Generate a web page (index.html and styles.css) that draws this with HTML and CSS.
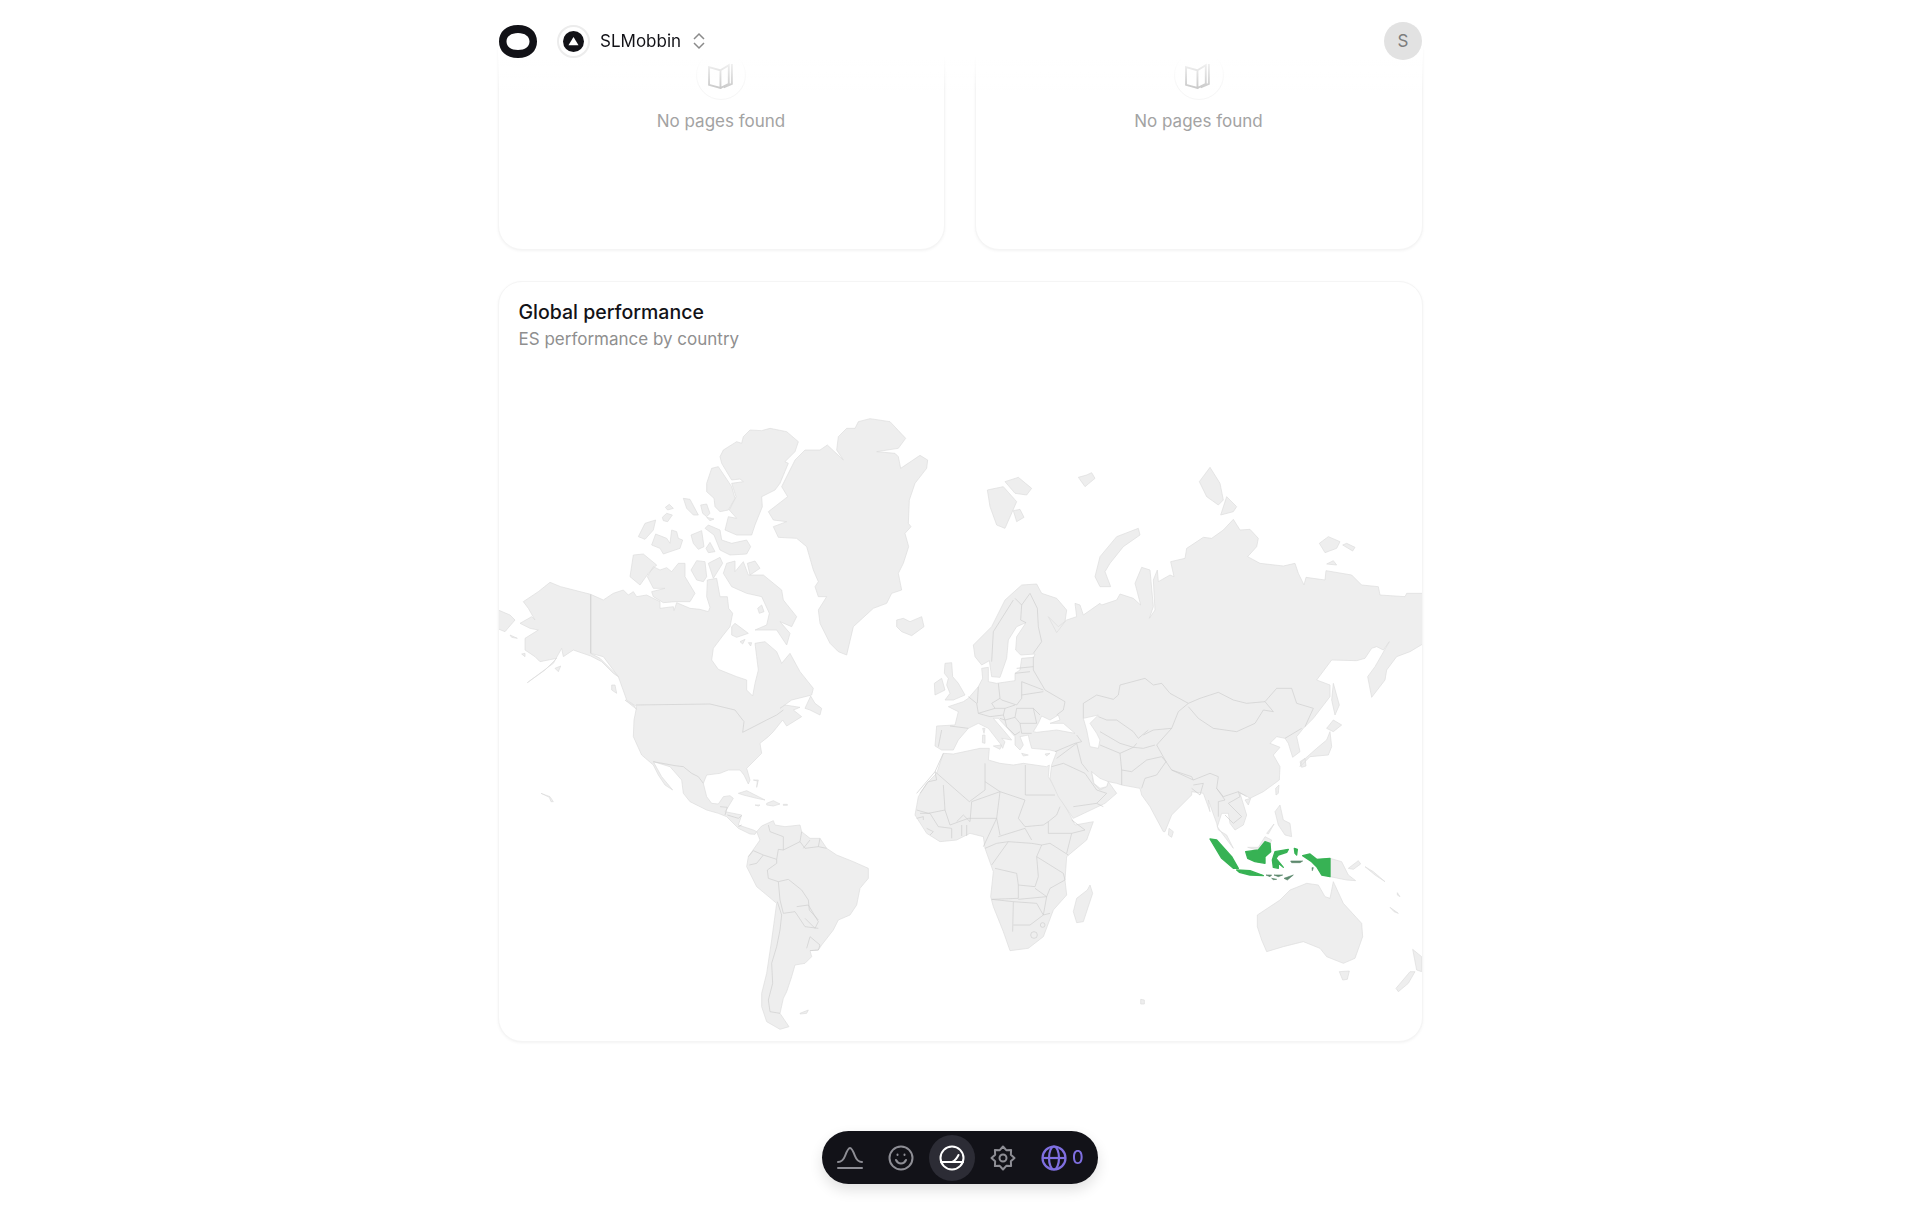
FILE: index.html
```html
<!DOCTYPE html>
<html lang="en">
<head>
  <meta charset="UTF-8" />
  <meta name="viewport" content="width=device-width, initial-scale=1.0"/>
  <title>Global performance</title>
  <link rel="stylesheet" href="styles.css">
</head>
<body>

  <header class="topbar">
    <div class="topbar-left">
      <svg class="logo" viewBox="0 0 38 33"><path fill-rule="evenodd" d="M19 0C31 0 38 7 38 16.5S31 33 19 33S0 26 0 16.5S7 0 19 0ZM19 8C12 8 7.500 11.500 7.500 16.500S12 25 19 25S30.500 21.500 30.500 16.500S26 8 19 8Z"/></svg>
      <div class="org-badge">
        <span class="org-dot"><svg viewBox="0 0 12 10"><path d="M6 .5L11.5 9.500H.5Z"/></svg></span>
      </div>
      <span class="org-name">SLMobbin</span>
      <svg class="chevrons" viewBox="0 0 14 18"><path d="M2 7L7 2L12 7M2 11L7 16L12 11"/></svg>
    </div>
    <div class="avatar">S</div>
  </header>

  <main class="page">
    <section class="two-cards">
      <div class="card empty-card">
        <span class="book-circle">
          <svg viewBox="0 0 26 26"><path d="M1 5L12 8V25L1 22ZM12 8L20 3V21L12 25M23 2V21L15 24.5"/></svg>
        </span>
        <p>No pages found</p>
      </div>
      <div class="card empty-card">
        <span class="book-circle">
          <svg viewBox="0 0 26 26"><path d="M1 5L12 8V25L1 22ZM12 8L20 3V21L12 25M23 2V21L15 24.5"/></svg>
        </span>
        <p>No pages found</p>
      </div>
    </section>

    <section class="card map-card">
      <div class="map-head">
        <h2>Global performance</h2>
        <p>ES performance by country</p>
      </div>

      <!-- viewBox units: 3 per screen pixel -->
      <svg class="world" viewBox="27 -144 2769 2067">
        <!-- North America -->
        <path class="land" d="M302 583L340 600 370 580 400 570 415 585 430 575 440 590 470 585 510 605 510 625 550 620 552 632 560 608 600 625 630 628 655 635 660 622 650 590 652 540 680 535 690 590 712 590 716 625 728 640 720 680 700 705 670 745 665 780 685 808 740 830 770 840 770 870 788 888 795 850 805 810 800 770 795 730 825 725 860 755 875 790 900 760 930 815 970 865 965 885 905 900 870 925 885 915 930 922 910 930 935 950 890 978 878 960 850 995 835 1010 810 1030 815 1060 770 1105 780 1140 775 1152 762 1125 750 1110 715 1110 690 1120 650 1125 640 1150 650 1190 665 1210 685 1212 700 1190 720 1187 730 1195 712 1225 705 1235 755 1245 745 1275 790 1290 800 1295 795 1303 780 1302 745 1285 710 1250 685 1240 650 1230 600 1205 580 1180 575 1140 540 1100 490 1085 515 1130 548 1170 525 1155 505 1125 490 1095 455 1065 430 1010 432 960 440 920 410 900 385 830 340 770 302 760Z"/>
        <path class="land" d="M100 605L145 575 180 547 212 560 302 583 302 760 330 775 385 830 370 820 335 785 302 768 250 750 220 770 215 745 190 790 112 848 165 810 200 775 150 785 135 770 105 750 105 715 145 690 120 685 90 670 125 650 135 660 115 625Z"/>
        <path class="land" d="M20 628L60 645 75 660 45 695 20 685Z"/>
        <path class="land" d="M60 705L82 715 65 712ZM95 762L105 760 105 770ZM195 805L212 798 205 815ZM365 855L375 855 380 880 365 870ZM405 900L440 928 430 915Z"/>
        <!-- Greenland and arctic islands -->
        <path class="land" d="M1105 65L1140 56 1200 65 1247 115 1225 145 1160 155 1215 160 1225 170 1232 205 1290 166 1313 180 1310 205 1275 250 1258 300 1255 370 1263 380 1245 400 1256 440 1240 490 1225 520 1235 570 1205 580 1190 610 1150 625 1090 680 1070 765 1045 755 1020 730 990 670 985 630 1010 590 985 590 975 560 985 545 970 510 950 440 920 415 865 412 850 380 890 365 850 360 835 335 893 290 875 260 915 180 945 150 990 150 1012 135 1060 180 1040 150 1045 110 1070 85 1095 85Z"/>
        <path class="land" d="M690 170L700 150 740 125 755 130 760 110 780 90 815 92 840 85 890 95 925 125 915 155 885 185 895 190 870 250 855 270 815 290 817 320 795 375 785 405 740 405 705 390 715 350 740 355 718 330 738 290 725 250 760 245 750 237 725 240 695 190Z"/>
        <path class="land" d="M650 250L665 205 685 200 725 260 735 295 715 330 690 335 675 320 672 295 650 275Z"/>
        <path class="land" d="M580 295L600 298 625 345 610 345 590 325ZM632 315L650 312 660 340 650 350 638 340ZM650 352L672 357 660 362ZM526 322L538 313 550 325 533 330ZM517 352L530 340 547 345 533 365 520 362ZM445 410L465 370 497 360 490 390 465 418Z"/>
        <path class="land" d="M485 435L497 402 530 415 540 430 545 390 560 395 565 415 578 420 570 445 520 462 510 445ZM603 405L635 392 642 440 625 448 610 430ZM648 445L660 427 675 455 655 458ZM645 385L655 375 690 390 695 420 725 430 770 420 782 440 770 462 720 465 690 450 672 405Z"/>
        <path class="land" d="M420 530L430 465 460 462 500 495 475 520 450 555ZM472 530L490 500 510 510 530 503 545 515 553 505 565 490 585 490 585 530 615 580 600 605 555 605 520 608 490 590 485 575 525 565 490 565ZM603 510L620 482 645 485 650 530 640 545 620 540ZM655 490L690 472 698 490 670 535Z"/>
        <path class="land" d="M700 520L710 490 735 483 735 515 760 485 775 525 820 525 875 570 880 600 920 650 905 680 870 665 900 700 890 735 870 705 860 690 795 690 830 675 838 640 815 590 770 580 725 560ZM772 490L795 483 810 505 780 525ZM725 680L735 670 775 700 740 712 725 705ZM750 725L765 718 758 732ZM803 625L815 615 822 635 808 640ZM775 728L785 728 782 738Z"/>
        <path class="land" d="M945 925L962 888 975 910 995 925 990 945 960 930Z"/>
        <path class="land" d="M1220 660L1240 655 1260 665 1295 650 1302 680 1265 707 1235 695 1220 680Z"/>
        <!-- Caribbean, Hawaii -->
        <path class="land" d="M745 1180L770 1172 825 1200 800 1195 760 1185ZM830 1210L850 1202 870 1212 850 1218 830 1215ZM795 1215L810 1215 805 1218ZM880 1213L892 1213 892 1216 880 1216ZM790 1140L805 1140 800 1162 802 1143ZM153 1180L180 1190 190 1205 183 1205 178 1192Z"/>
        <path class="border" d="M302 583V760M438 915L660 912 735 930 762 965 758 997 795 978 830 960 860 945 880 930M490 1085L555 1097 580 1100 605 1120 625 1130 640 1150M690 1220L712 1222 705 1245M712 1245L745 1255 755 1247M745 1280L755 1275"/>
        <!-- South America -->
        <path class="land" d="M800 1295L815 1278 850 1262 855 1275 885 1280 930 1275 935 1295 960 1315 990 1315 1010 1345 1040 1365 1090 1385 1135 1405 1135 1435 1110 1465 1100 1515 1080 1545 1045 1560 1030 1590 995 1635 985 1650 960 1652 965 1670 945 1690 915 1695 905 1730 890 1775 880 1795 870 1840 897 1880 870 1888 830 1865 815 1820 815 1780 830 1720 845 1620 860 1510 800 1460 770 1400 775 1370 810 1320Z"/>
        <path class="border" d="M835 1275L840 1295 880 1310 880 1350 865 1348 860 1378 860 1390 832 1410 835 1435 865 1445 895 1438 935 1470 955 1500 958 1530 985 1560M880 1350L930 1325 935 1295M940 1345L960 1320M985 1340L990 1315M930 1325L945 1345 985 1340 1010 1345M775 1370L790 1352 820 1365 800 1390 778 1395M820 1365L860 1378M865 1445L870 1500 880 1540 915 1535 945 1580 985 1585M920 1520L955 1515 985 1565 975 1585 945 1555M862 1505L875 1545 870 1590 860 1640 845 1690 848 1750 835 1800 840 1835 870 1840M950 1645L960 1610 990 1635 985 1650 960 1652"/>
        <path class="land" d="M930 1840L955 1830 950 1840 930 1842Z"/>
        <!-- Africa -->
        <path class="land" d="M1360 1060L1390 1062 1470 1045 1498 1045 1495 1080 1530 1090 1570 1095 1600 1090 1670 1100 1678 1095 1675 1130 1740 1245 1755 1275 1810 1265 1790 1320 1730 1370 1725 1440 1730 1485 1690 1530 1660 1610 1615 1645 1560 1652 1540 1595 1510 1520 1502 1490 1510 1415 1485 1345 1480 1310 1440 1300 1400 1320 1350 1325 1310 1300 1275 1245 1285 1190 1310 1150 1340 1120Z"/>
        <path class="border" d="M1606 1095V1185H1695M1485 1090V1145L1530 1175 1605 1200 1585 1255 1605 1280 1660 1275 1675 1265 1700 1245 1710 1220M1675 1300H1745L1785 1290 1745 1260M1675 1265L1675 1300M1530 1175L1520 1255 1530 1305M1445 1205L1530 1175M1435 1255L1520 1255 1480 1340M1525 1310L1605 1285 1625 1320M1485 1345L1520 1330 1555 1325 1625 1330 1655 1335 1640 1370 1645 1430 1635 1460 1585 1455 1580 1420 1515 1405M1555 1325L1505 1395M1655 1335L1680 1330 1735 1365M1640 1370L1720 1420 1725 1440 1680 1465M1745 1300L1730 1360M1585 1455L1585 1495 1505 1498M1635 1465L1670 1490 1585 1498M1680 1465L1670 1490 1660 1545 1680 1540M1505 1498L1570 1505 1568 1595M1570 1505L1640 1510 1660 1545 1620 1575 1570 1575"/>
        <path class="border" d="M1360 1060L1335 1115 1280 1180M1290 1180L1315 1145 1340 1140 1335 1115 1438 1205 1485 1170 1485 1145M1360 1155L1365 1230 1315 1240 1280 1230M1365 1230L1380 1275 1435 1255M1290 1240H1320L1345 1280 1385 1285 1385 1315M1400 1265L1420 1245 1440 1265M1415 1275V1308M1430 1275V1308M1280 1255L1300 1250 1300 1260M1310 1285L1330 1295 1320 1305M1440 1265L1445 1205"/>
        <circle class="border" cx="1632" cy="1605" r="10"/>
        <circle class="border" cx="1658" cy="1575" r="7"/>
        <path class="land" d="M1800 1455L1808 1480 1780 1565 1760 1568 1750 1535 1760 1495 1792 1470Z"/>
        <!-- Eurasia -->
        <path class="land" d="M1450 735L1505 680 1545 600 1595 555 1640 552 1655 580 1700 595 1730 630 1725 665 1700 698 1675 650 1705 680 1730 660 1760 650 1755 610 1770 615 1780 645 1830 610 1835 615 1880 600 1890 582 1930 595 1952 615 1935 550 1955 502 1980 510 1990 620 1978 655 1995 630 1990 540 2002 510 2005 545 2040 525 2052 530 2042 485 2085 475 2090 445 2140 412 2165 415 2200 390 2230 358 2250 390 2280 388 2305 415 2300 440 2273 470 2310 490 2380 498 2415 490 2425 520 2442 555 2448 532 2505 540 2508 512 2585 525 2615 555 2665 560 2670 585 2745 590 2750 580 2810 580 2810 725 2760 755 2720 770 2690 810 2685 840 2645 892 2633 830 2655 800 2698 725 2680 750 2660 740 2645 745 2625 775 2600 782 2525 780 2480 840 2520 855 2520 890 2470 955 2440 985 2420 1010 2430 1055 2408 1072 2395 1030 2385 1015 2360 1010 2340 1030 2370 1042 2350 1065 2370 1100 2368 1140 2320 1175 2280 1195 2265 1185 2250 1180 2270 1245 2260 1275 2235 1290 2220 1270 2215 1240 2195 1240 2182 1280 2200 1305 2230 1345 2210 1305 2185 1290 2180 1270 2155 1200 2160 1235 2140 1180 2105 1175 2105 1185 2045 1245 2025 1295 2020 1295 1980 1220 1955 1185 1950 1165 1895 1155 1880 1150 1855 1145 1880 1180 1845 1210 1750 1255 1705 1190 1680 1135 1685 1095 1700 1055 1680 1050 1625 1045 1618 1020 1615 1005 1590 1010 1600 1035 1590 1050 1575 1035 1575 1010 1525 955 1510 955 1540 990 1565 1020 1535 1015 1545 1025 1538 1045 1530 1030 1495 985 1465 970 1435 985 1405 1020 1390 1050 1355 1050 1335 1038 1340 978 1395 975 1405 935 1375 920 1420 905 1435 895 1465 860 1478 835 1475 805 1495 802 1495 845 1520 850 1575 842 1575 820 1590 810 1595 775 1632 772 1635 762 1592 765 1577 750 1580 710 1608 668 1580 680 1555 720 1550 775 1530 832 1505 830 1498 782 1475 795 1455 770Z"/>
        <path class="land" d="M1805 1115L1810 1150 1830 1170 1850 1160 1855 1145 1835 1150 1820 1130Z" />
        <path class="water" d="M1630 995L1645 970 1655 948 1680 960 1705 945 1710 960 1680 970 1720 970 1755 1000 1700 990 1640 997Z"/>
        <path class="water" d="M1780 955L1825 945 1800 970 1820 1000 1830 1020 1825 1045 1800 1040 1790 990Z"/>
        <path class="water" d="M1805 1115L1830 1135 1855 1145 1850 1160 1830 1165 1812 1150Z"/>
        <path class="border" d="M1620 580L1642 625 1645 680 1655 725 1630 760M1575 595L1595 615 1620 580M1505 785L1510 695 1570 600M1595 615L1592 660 1608 668M1630 770L1630 810 1665 870 1725 905 1720 930 1700 945"/>
        <path class="border" d="M1435 890L1460 910 1465 940M1465 860L1462 910M1465 940L1515 925 1505 910 1530 895 1525 850M1530 895L1535 900 1580 915 1595 895 1595 845M1595 845L1660 870M1595 885L1660 875M1575 820L1620 815M1580 805L1630 800M1580 925L1630 925 1650 945M1575 915L1545 925 1515 925M1465 940L1500 950 1540 945 1545 925M1540 945L1545 960 1575 952 1580 925M1575 952L1590 970 1640 970 1630 925M1590 970L1595 1000 1625 1000M1545 960L1550 980 1575 1005 1590 995M1530 955L1545 960M1355 990L1345 1040M1380 978L1435 985"/>
        <path class="border" d="M1700 1075L1740 1045 1760 1030 1775 1090 1795 1115M1685 1100L1720 1090 1785 1120 1820 1170 1850 1180 1820 1210 1750 1220M1695 1055L1755 1030 1775 1025 1760 1005M1820 1210L1840 1220"/>
        <path class="border" d="M1780 955V910L1820 885 1870 898 1885 885 1890 855 1965 835 1990 855 2015 850 2040 880 2095 910 2065 935 2045 985 1990 990 1960 1005M1825 950L1850 960H1880L1930 995 1945 1015 1975 990M1830 995L1890 1030 1930 1042 1940 1030M1890 1060L1930 1042 1960 1045 1995 1035M1830 1035L1890 1060 1895 1110 1925 1115 1970 1080 2015 1070 2028 1085 2000 1125 1965 1135 1955 1165M1895 1110V1155M2045 985L2000 1035 2028 1085 2045 1110 2110 1140 2160 1120 2185 1130 2180 1165 2200 1190 2245 1175 2270 1190"/>
        <path class="border" d="M2095 910L2130 895 2185 877 2230 900 2270 910 2325 905 2350 935 2320 930 2295 970 2240 995 2170 985 2125 955 2095 920M2325 905L2360 865 2405 865 2420 910 2470 925 2445 980M2435 985L2385 1015M2045 1110L2105 1130 2110 1140M2110 1155L2140 1150 2130 1185 2105 1165M2180 1165L2205 1200 2185 1205 2185 1250M2245 1175L2250 1190 2215 1210 2255 1250 2230 1270 2205 1245"/>
        <!-- Europe and Asia islands -->
        <path class="land" d="M1365 790L1385 788 1388 830 1405 850 1425 885 1390 900 1365 900 1380 880 1370 855 1375 835 1363 820ZM1333 850L1355 835 1365 870 1335 885Z"/>
        <path class="land" d="M1478 1005L1485 1005 1485 1030 1477 1028ZM1478 985L1485 985 1482 1000ZM1510 1038L1535 1035 1530 1048ZM1595 1060L1615 1065 1600 1068ZM1665 1062L1680 1060 1670 1068Z"/>
        <path class="land" d="M1492 270L1540 260 1580 305 1545 385 1520 375 1500 320ZM1545 245L1585 232 1625 265 1610 285 1575 280ZM1570 332L1590 328 1602 352 1580 365ZM1765 232L1790 225 1805 218 1815 235 1785 260ZM1815 530L1830 470 1880 410 1945 385 1950 405 1900 440 1860 490 1845 515 1862 560 1830 560ZM2128 245L2160 202 2190 250 2200 300 2185 315 2150 290ZM2192 345L2210 290 2240 320 2230 335ZM2488 430L2515 410 2550 425 2540 445 2505 458ZM2558 435L2570 430 2595 442 2588 453ZM2510 492L2530 482 2540 495Z"/>
        <path class="land" d="M2530 850L2548 915 2535 945 2525 900ZM2510 985L2530 960 2555 975 2530 995ZM2520 995L2525 1040 2515 1065 2460 1070 2430 1100 2435 1085 2480 1045 2510 1020ZM2430 1085L2445 1075 2448 1098 2435 1102ZM2357 1165L2367 1155 2365 1180 2358 1185ZM2355 1235L2370 1215 2380 1260 2400 1270 2405 1310 2385 1305 2365 1275ZM2330 1300L2352 1272 2335 1302ZM2265 1200L2282 1195 2275 1215ZM2037 1285L2050 1295 2045 1312 2035 1305Z"/>
        <!-- Oceania -->
        <path class="land" d="M2520 1375L2555 1385 2575 1425 2597 1442 2570 1440 2520 1430ZM2575 1405L2605 1382 2612 1392 2590 1408ZM2625 1400L2650 1415 2685 1445 2655 1425ZM2722 1478L2730 1490 2722 1485ZM2700 1522L2725 1540 2712 1535Z"/>
        <path class="land" d="M2302 1545L2370 1500 2400 1470 2450 1450 2485 1455 2505 1490 2520 1495 2530 1445 2560 1510 2615 1570 2618 1610 2595 1675 2560 1690 2510 1670 2490 1645 2440 1625 2380 1640 2330 1655 2315 1620 2302 1580Z"/>
        <path class="land" d="M2548 1715L2578 1713 2572 1738 2558 1740ZM2768 1648L2795 1670 2795 1715 2780 1710ZM2775 1715L2755 1750 2725 1775 2718 1765 2760 1715ZM1952 1798L1963 1800 1963 1812 1952 1812Z"/>
        <!-- Malaysian part of Borneo, then Indonesia -->
        <path class="land" d="M2273 1342L2305 1342 2325 1310 2345 1320 2340 1332 2305 1352Z"/>
        <path class="active" d="M2160 1317L2180 1320 2225 1370 2245 1405 2230 1405 2195 1375ZM2240 1410L2280 1412 2320 1427 2280 1425 2248 1417ZM2267 1355L2305 1350 2325 1325 2340 1330 2342 1355 2325 1370 2325 1390 2295 1385 2273 1375ZM2355 1355L2395 1348 2390 1357 2365 1365 2358 1375 2380 1402 2365 1390 2365 1405 2350 1402 2347 1380ZM2413 1345L2422 1348 2420 1365 2415 1360ZM2438 1367L2460 1362 2480 1378 2520 1375 2520 1430 2495 1425 2480 1400 2465 1385Z"/>
        <path class="active-dim" d="M2402 1383L2438 1383 2430 1388 2405 1388ZM2328 1425L2345 1425 2340 1430ZM2352 1425L2378 1425 2365 1430ZM2345 1435L2360 1438 2350 1439ZM2382 1435L2410 1425 2392 1440ZM2466 1403L2470 1403 2467 1412Z"/>
      </svg>
    </section>
  </main>

  <nav class="dock">
    <a class="dock-item">
      <svg viewBox="0 0 26 26"><path d="M1 17C5 17 6.5 15 8 11S11 3 13 3S16.5 7 18 11S21 17 25 17"/><path d="M1 23H25"/></svg>
    </a>
    <a class="dock-item">
      <svg viewBox="0 0 26 26"><circle cx="13" cy="13" r="11.5"/><path d="M8 15C10 19.5 16 19.5 18 15M9.5 9.5V10M16.5 9.5V10"/></svg>
    </a>
    <a class="dock-item active-item">
      <svg viewBox="0 0 26 26"><circle cx="13" cy="13" r="11.5"/><path d="M2 17H24M13 17C16 16 18 13 19.5 10"/></svg>
    </a>
    <a class="dock-item">
      <svg viewBox="0 0 26 26"><path d="M24.5 13L20.850 16.250 21.100 21.100 16.250 20.850 13 24.5 9.750 20.850 4.900 21.100 5.150 16.250 1.5 13 5.150 9.750 4.900 4.900 9.750 5.150 13 1.5 16.250 5.150 21.100 4.900 20.850 9.750Z"/><circle cx="13" cy="13" r="3.5"/></svg>
    </a>
    <a class="dock-globe">
      <svg viewBox="0 0 26 26"><circle cx="13" cy="13" r="11.5"/><ellipse cx="13" cy="13" rx="5" ry="11.5"/><path d="M1.5 13H24.5"/></svg>
      <span>0</span>
    </a>
  </nav>

</body>
</html>
```

FILE: styles.css
```css
body {
  font-family: Inter, "Liberation Sans", sans-serif;
  margin: 0;
  padding: 0;
  height: 1205px;
  overflow: hidden;
  background-color: #fff;
  color: #121217;
}

.page {
  width: 925px;
  margin: 0 auto;
  padding-top: 30px;
}

.topbar {
  position: fixed;
  top: 0;
  left: 498px;
  width: 925px;
  height: 90px;
  padding: 22px 1px 0 0;
  box-sizing: border-box;
  display: flex;
  justify-content: space-between;
  align-items: flex-start;
  background: linear-gradient(#fff 60%, rgba(255, 255, 255, 0));
  z-index: 2;
}

.topbar-left {
  display: flex;
  align-items: center;
  height: 38px;
}

.logo {
  width: 38px;
  height: 33px;
  margin-left: 1px;
  fill: #121217;
}

.org-badge {
  width: 33px;
  height: 33px;
  margin-left: 20px;
  box-sizing: border-box;
  border: 2px solid #ececec;
  border-radius: 50%;
  display: flex;
  align-items: center;
  justify-content: center;
}

.org-dot {
  width: 21px;
  height: 21px;
  border-radius: 50%;
  background-color: #121217;
  display: flex;
  align-items: center;
  justify-content: center;
}

.org-dot svg {
  width: 11px;
  height: 10px;
  fill: #fff;
}

.org-name {
  margin-left: 10px;
  font-size: 17px;
  line-height: 24px;
}

.chevrons {
  width: 14px;
  height: 18px;
  margin-left: 11px;
  fill: none;
  stroke: #8a8a8a;
  stroke-width: 1.5;
}

.avatar {
  width: 38px;
  height: 38px;
  border-radius: 50%;
  background-color: #e2e2e2;
  color: #7d7d7d;
  font-size: 17px;
  display: flex;
  align-items: center;
  justify-content: center;
}

.card {
  background-color: #fff;
  border: 1px solid #f5f5f5;
  border-radius: 24px;
  box-shadow: 0 1px 3px rgba(0, 0, 0, 0.05);
  box-sizing: border-box;
}

.two-cards {
  display: grid;
  grid-template-columns: 447px 448px;
  gap: 30px;
  margin-bottom: 31px;
}

.empty-card {
  height: 220px;
  padding-top: 19px;
  display: flex;
  flex-direction: column;
  align-items: center;
}

.book-circle {
  width: 50px;
  height: 50px;
  box-sizing: border-box;
  border: 1px solid #f6f6f6;
  border-radius: 50%;
  display: flex;
  align-items: center;
  justify-content: center;
}

.book-circle svg {
  width: 27px;
  height: 27px;
  fill: none;
  stroke: #c8c8c8;
  stroke-width: 1.8;
}

.empty-card p {
  margin: 9px 0 0;
  font-size: 17px;
  line-height: 24px;
  color: #a3a3a3;
}

.map-card {
  height: 761px;
}

.map-head {
  padding: 18px 20px 1px;
}

.map-head h2 {
  margin: 0;
  font-size: 19.5px;
  line-height: 24px;
  font-weight: 500;
}

.map-head p {
  margin: 3px 0 0;
  font-size: 17px;
  line-height: 24px;
  color: #8f8f8f;
}

.world {
  display: block;
  width: 923px;
  height: 689px;
  border-radius: 0 0 24px 24px;
}

.land {
  fill: #eeeeee;
  stroke: #dddddd;
  stroke-width: 2;
  stroke-linejoin: round;
}

.water {
  fill: #fff;
  stroke: #dddddd;
  stroke-width: 2;
  stroke-linejoin: round;
}

.border {
  fill: none;
  stroke: #cdcdcd;
  stroke-width: 2;
  stroke-linejoin: round;
}

.active {
  fill: #37b254;
  stroke: #37b254;
  stroke-width: 4;
  stroke-linejoin: round;
}

.active-dim {
  fill: #5d8a6e;
  stroke: #5d8a6e;
  stroke-width: 2;
}

.dock {
  position: fixed;
  left: 822px;
  top: 1131px;
  width: 276px;
  height: 53px;
  box-sizing: border-box;
  padding: 0 5px;
  display: flex;
  align-items: center;
  gap: 5px;
  background-color: #121218;
  border-radius: 27px;
  box-shadow: 0 6px 14px rgba(0, 0, 0, 0.12);
}

.dock-item {
  width: 46px;
  height: 46px;
  border-radius: 50%;
  display: flex;
  align-items: center;
  justify-content: center;
}

.dock-item svg {
  width: 26px;
  height: 26px;
  fill: none;
  stroke: #8e8e95;
  stroke-width: 2;
  stroke-linecap: round;
  stroke-linejoin: round;
}

.active-item {
  background-color: #2c2c35;
}

.active-item svg {
  stroke: #fff;
}

.dock-globe {
  display: flex;
  align-items: center;
  gap: 5px;
  margin-left: 10px;
  color: #7f6fe0;
  font-size: 18px;
  font-weight: 500;
}

.dock-globe svg {
  width: 26px;
  height: 26px;
  fill: none;
  stroke: #7f6fe0;
  stroke-width: 2.2;
}
```
